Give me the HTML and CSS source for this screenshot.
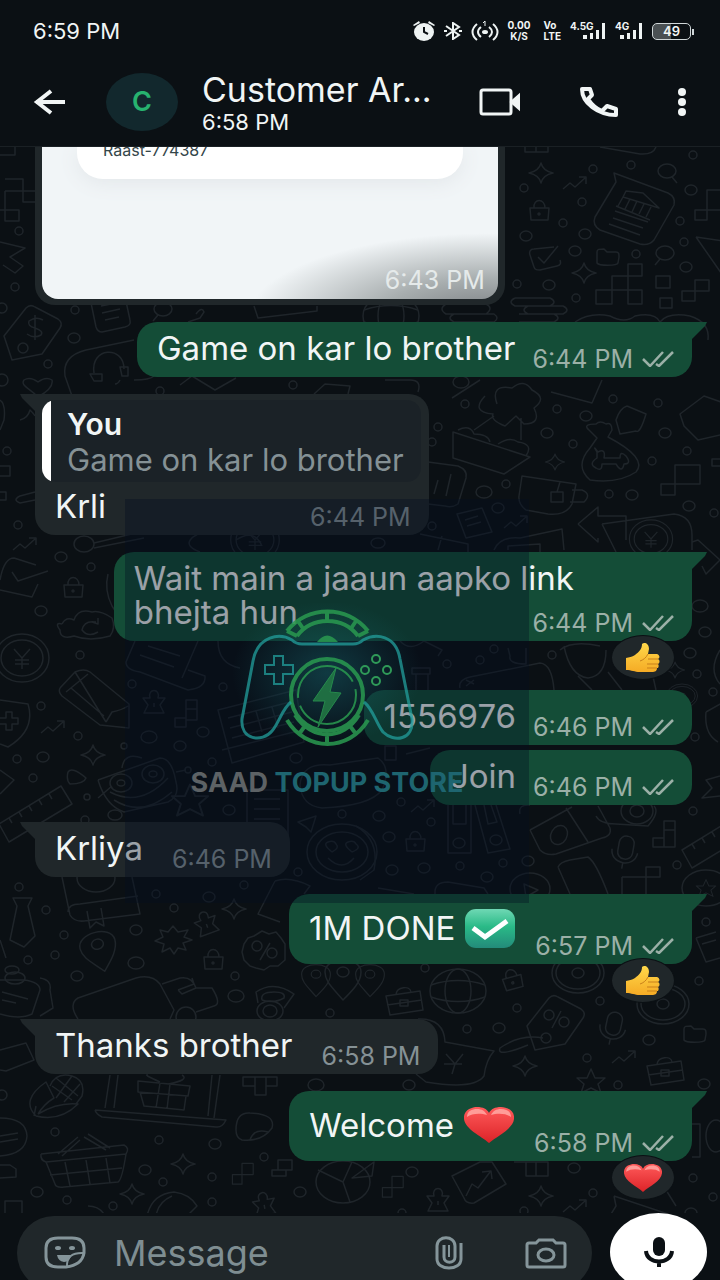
FILE: index.html
```html
<!DOCTYPE html>
<html lang="en">
<head>
  <meta charset="UTF-8">
  <meta name="viewport" content="width=device-width, initial-scale=1.0">
  <title>Chat</title>
  <link rel="stylesheet" href="styles.css">
</head>
<body>
  <!-- Shared shapes -->
  <svg class="defs" aria-hidden="true">
    <defs>
      <linearGradient id="redGrad" x1="0" y1="0" x2="0" y2="1">
        <stop offset="0" stop-color="#ff5a5a"/><stop offset="1" stop-color="#dc2328"/>
      </linearGradient>
      <linearGradient id="greenGrad" x1="0" y1="0" x2="0" y2="1">
        <stop offset="0" stop-color="#6fd8b4"/><stop offset="0.45" stop-color="#2aba87"/><stop offset="1" stop-color="#238b7a"/>
      </linearGradient>
      <linearGradient id="handGrad" x1="0" y1="0" x2="0" y2="1">
        <stop offset="0" stop-color="#ffd84a"/><stop offset="1" stop-color="#f5ab25"/>
      </linearGradient>
      <symbol id="heart" viewBox="0 0 50 36" preserveAspectRatio="none">
        <path d="M25 36C17 29 1 22 0 12C-1 3 8 0 13 0C19 0 23 2 25 6C27 2 31 0 37 0C42 0 51 3 50 12C49 22 33 29 25 36Z" fill="url(#redGrad)"/>
        <path d="M3 10C3 4 8 2 13 2C18 2 21 4 23 8C17 6 8 6 3 10ZM27 8C29 4 32 2 37 2C42 2 47 4 47 10C42 6 33 6 27 8Z" fill="#ff9c98"/>
      </symbol>
      <symbol id="thumb" viewBox="0 0 34 29" preserveAspectRatio="none">
        <path d="M0 15C3 14 6 14 9 12C13 9 16 6 16 1C18-1 23 0 23 6L22 11L31 11C34 12 34 15 32 16C34 17 34 20 32 21C33 22 33 25 31 25C31 28 29 29 26 29L14 29C8 29 6 27 0 27Z" fill="url(#handGrad)"/>
        <path d="M22 11C20 15 17 17 14 18M22 16L32 16M21 21L32 21M21 25L31 25" fill="none" stroke="#c9801a" stroke-width="1"/>
      </symbol>
      <symbol id="ticks" viewBox="0 0 32 16">
        <path d="M1 8L8 15L21 1M14 13L17 15L31 1" fill="none" stroke="currentColor" stroke-width="2.5"/>
      </symbol>
      <g id="spark"><path d="M0-10Q2-2 12 0Q2 2 0 10Q-2 2-12 0Q-2-2 0-10Z"/></g>
      <g id="lock"><path d="M-9-3L10-3L9 9L-8 9ZM-5-3C-6-13 6-13 6-3"/><circle cy="3" r="1"/></g>
      <g id="trend"><path d="M-12 6L-5 0L0 4L10-5M4-6L11-6L11 1"/></g>
      <g id="blocks"><path d="M-20 8H-4V22H-20ZM-4-6H12V8H-4ZM12-18H26V-6H12ZM12 8H26V22H12Z"/></g>
      <g id="blocks2"><path d="M-12 2H0V14H-12ZM0-12H14V2H0Z"/></g>
      <g id="pawn"><path d="M-10 11L10 11L6 3L11-4L4-4C7-14-7-14-4-4L-11-4L-6 3ZM0 1V5"/></g>
      <g id="folder"><path d="M-11-5C-11-8-9-8-4-8L-1-5L8-5C11-5 11-3 11 0L10 6C9 9-9 9-11 6Z"/></g>
      <g id="mic"><rect x="-7" y="-14" width="15" height="23" rx="7"/><path d="M-13 1C-12 17 12 17 13 1M0 13V19"/></g>
      <g id="coin"><ellipse rx="27" ry="24"/><ellipse rx="21" ry="18"/><path d="M-8-9L0 0L8-9M0 0V11M-7 2H7M-7 6H7"/></g>
      <g id="tag"><path d="M-30 8L-8-20C-5-23-2-23 1-21L24-9C28-6 28-3 26 0L8 26L-22 32Z"/><circle cx="-11" cy="20" r="5"/></g>
      <g id="note"><path d="M-20-14L14-20L20 8C21 12 19 14 15 15L-8 20C-12 20-13 18-14 15ZM-9-6L6-9M-8 1L10-3M-5 8L9 5"/></g>
      <g id="pin"><path d="M0 22C-10 10-18 4-18-6C-18-22 18-22 18-6C18 4 10 12 0 22Z"/><ellipse cy="-6" rx="6" ry="5"/></g>
      <g id="search"><ellipse rx="9" ry="7"/><path d="M5 6L10 12"/></g>
      <g id="globe"><ellipse rx="28" ry="22"/><ellipse rx="13" ry="22"/><path d="M-27-6C-10-12 10-12 27-6M-27 6C-10 12 10 12 27 6"/></g>
      <g id="star"><path d="M0-12L4-3L14-3L7 3L10 12L0 7L-10 12L-7 3L-14-3L-4-3Z"/></g>
      <g id="ring"><ellipse rx="26" ry="20"/><ellipse rx="22" ry="16"/><ellipse rx="6" ry="5"/></g>
      <g id="case"><path d="M-18-6L16-11L19 8L-14 13ZM-8-8C-7-15 6-17 7-10M-17 3L18-2"/><rect x="-4" y="-2" width="8" height="6"/></g>
      <g id="ruler"><path d="M-36 16L26-22L37-4L-26 34ZM-26 10L-23 15M-16 4L-13 9M-6-2L-3 3M4-8L7-3M14-14L17-9"/></g>
      <g id="check"><path d="M10-11L-10-9C-14-9-15-6-14-3L-10 9C-9 12-7 12-4 12L13 8C17 7 17 5 16 2M-6-1L0 5L14-12"/></g>
    </defs>
  </svg>

  <div class="phone">
    <!-- Status bar -->
    <div class="status">
      <span class="clock">6:59 PM</span>
      <div class="status-icons">
        <svg class="i-alarm" viewBox="0 0 22 20" fill="#eef3f3" role="img" aria-label="Alarm">
          <ellipse cx="11" cy="11" rx="10" ry="9"/><path d="M0 4L6 0L7 2L1 5ZM22 4L16 0L15 2L21 5Z"/>
          <path d="M11 6V11L15 13" fill="none" stroke="#0b1014" stroke-width="2"/>
        </svg>
        <svg class="i-bt" viewBox="0 0 18 18" fill="none" stroke="#eef3f3" stroke-width="2" role="img" aria-label="Bluetooth">
          <path d="M2 4L15 13L9 17V1L15 5L2 14M0 9H3M15 9H18"/>
        </svg>
        <svg class="i-hot" viewBox="0 0 28 20" fill="none" stroke="#eef3f3" stroke-width="2" role="img" aria-label="Hotspot">
          <path d="M6 3C0 8 0 14 6 19M10 6C6 9 6 13 10 16M22 3C28 8 28 14 22 19M18 6C22 9 22 13 18 16"/>
          <ellipse cx="14" cy="11" rx="3" ry="2" fill="#eef3f3" stroke="none"/><path d="M12 2L14 0V5" stroke-width="1"/>
        </svg>
        <span class="tiny"><b>0.00</b><b>K/S</b></span>
        <span class="tiny lte"><b>Vo</b><b>LTE</b></span>
        <span class="signal">
          <b>4.5G</b>
          <svg viewBox="0 0 24 18" fill="#eef3f3" aria-hidden="true"><path d="M1 13H5V17H1ZM8 11H11V17H8ZM14 8H17V17H14ZM20 1H23V17H20Z"/></svg>
        </span>
        <span class="signal">
          <b>4G</b>
          <svg viewBox="0 0 24 18" fill="#eef3f3" aria-hidden="true"><path d="M1 13H5V17H1ZM8 11H11V17H8ZM14 8H17V17H14ZM20 1H23V17H20Z"/></svg>
        </span>
        <span class="battery">49</span>
      </div>
    </div>

    <!-- Chat header -->
    <header class="topbar">
      <button class="icon-btn back" aria-label="Back">
        <svg width="33" height="26" viewBox="0 0 33 26" fill="none" stroke="#f1f5f5" stroke-width="4"><path d="M18 2L4 13L18 24M3 13H32"/></svg>
      </button>
      <div class="avatar">C</div>
      <div class="who">
        <h1>Customer Ar...</h1>
        <p>6:58 PM</p>
      </div>
      <div class="actions">
        <button class="icon-btn" aria-label="Video call">
          <svg width="42" height="28" viewBox="0 0 42 28" fill="none" stroke="#f1f5f5" stroke-width="3"><rect x="2" y="2" width="30" height="24" rx="2"/><path d="M32 14L40 7V21Z" fill="#f1f5f5" stroke-width="2"/></svg>
        </button>
        <button class="icon-btn" aria-label="Voice call">
          <svg width="38" height="30" viewBox="0 0 38 30" fill="none" stroke="#f1f5f5" stroke-width="4" stroke-linejoin="round"><path d="M2 2H10L12 8L8 12C12 18 17 22 22 24L27 19L36 22V28C18 28 2 16 2 2Z"/></svg>
        </button>
        <button class="icon-btn" aria-label="More options">
          <svg width="10" height="28" viewBox="0 0 10 28" fill="#f1f5f5"><ellipse cx="5" cy="4" rx="4" ry="4"/><ellipse cx="5" cy="14" rx="4" ry="4"/><ellipse cx="5" cy="24" rx="4" ry="4"/></svg>
        </button>
      </div>
    </header>

    <!-- Conversation -->
    <main class="chat">
      <svg class="wallpaper" viewBox="0 147 720 1133" preserveAspectRatio="xMidYMin slice" fill="none" stroke="#1f252a" stroke-width="1.5" stroke-linejoin="round" aria-hidden="true">
        <!-- right of the photo -->
        <use href="#spark" transform="translate(541 173)"/><use href="#trend" transform="translate(575 183)"/>
        <use href="#lock" transform="translate(539 211)"/><use href="#search" transform="translate(667 171)"/>
        <path d="M614 173L668 193Q676 197 674 205L654 240Q649 246 640 244L600 230Q592 225 595 217L616 182ZM623 197L626 191L643 193L659 208ZM616 206L650 220M615 211L648 222M623 197L618 206M630 199L625 209M637 201L632 212M644 204L639 214M651 207L646 217M613 218L643 228M609 224L640 235"/>
        <use href="#check" transform="translate(544 258)"/><use href="#folder" transform="translate(608 257)"/>
        <use href="#spark" transform="translate(584 273)"/><use href="#search" transform="translate(665 253) scale(-1 1)"/>
        <use href="#blocks" transform="translate(616 282)"/><path d="M656 276H670V288H656ZM660 298H672V308H660ZM682 291H695V301H682ZM695 280H709V291H695Z"/>
        <path d="M707 190H730V210H707ZM695 210H707V220H695ZM696 237L726 280M696 237L730 242M525 147V152H548V147M536 147V152M600 147L640 154Q653 155 656 147"/>
        <path d="M515 298H550Q558 302 550 306H515Q507 302 515 298M528 306H563Q571 310 563 314H528Q520 310 528 306M519 314H554Q562 318 554 322H519"/>
        <path d="M446 304H486Q494 308 486 314H446Q438 309 446 304M454 314H494Q500 318 494 322H454Q446 318 454 314"/>
        <use href="#globe" transform="translate(391 316)"/><path d="M575 322Q590 312 610 316Q625 324 635 316Q655 312 660 322Q668 312 690 316Q710 322 708 340"/>
        <!-- left edge, top -->
        <path d="M5 179H23V202H35M5 191H35M5 191V221H19V210H0M0 155H15V147M0 242L25 248L10 257L23 266L15 273L3 265"/>
        <use href="#tag" transform="translate(34 328)"/><path d="M43 320Q36 316 29 321Q27 326 35 328Q44 331 41 335Q34 339 27 334M35 315V340"/>
        <use href="#note" transform="translate(110 312)"/><use href="#search" transform="translate(163 309) scale(-1 1)"/>
        <path d="M134 340L86 350Q62 356 65 376L72 396M134 380Q150 380 154 376M94 373C90 347 124 345 124 369M90 374H102V381H94ZM120 367H128V376H122ZM120 380Q118 384 115 384"/>
        <path d="M38 397C30 388 20 386 24 380Q30 376 38 382Q46 376 52 380Q54 388 38 397M180 385L192 376L215 390L236 378M314 394L325 384L350 386L348 394"/>
        <path d="M254 306L258 318L317 311V306M188 322L200 318L204 312Q202 306 196 314"/>
        <!-- middle right -->
        <path d="M385 380H410Q422 380 418 392M452 398L480 380M497 404Q490 384 512 388Q524 378 532 390Q548 398 534 408Q542 424 524 424L516 416L505 426Q490 420 493 414Q470 412 485 396M474 430L494 416M521 418L521 440"/>
        <path d="M453 432L530 457L504 474L453 458ZM458 430Q470 424 474 434Q488 434 490 442M498 444Q510 436 518 442Q534 444 526 456"/>
        <path d="M428 462L458 466Q468 470 466 478L458 504Q452 508 445 506L428 504M438 480L434 494M451 474L446 496"/>
        <path d="M522 476L576 484L572 504Q566 516 548 514L526 510Q518 504 519 496ZM572 490H582Q592 494 584 502H570M560 482L557 492M551 492H563V502H551Z"/>
        <path d="M551 392L592 403L602 380M627 406L646 414Q640 434 636 431L620 434L616 420Q620 408 627 406M589 430Q582 424 596 424Q600 420 606 424Q612 422 612 430L608 437Q648 458 636 472Q618 484 590 480Q574 466 590 448L597 438ZM597 452Q592 444 598 452Q606 448 604 458H620Q620 450 626 456Q632 464 624 464Q622 474 616 464L602 464Q602 472 596 468Q588 464 597 458Z"/>
        <path d="M721 402L704 396L680 414L684 426L698 440L724 434M675 465H700V484H675ZM661 484H675V495H661ZM712 459H730V466H712Z"/>
        <use href="#spark" transform="translate(555 462) scale(.8)"/>
        <path d="M578 524L598 507V516H626V540M598 538V542L578 524M602 524L674 514Q692 516 692 535V550M602 524L616 552"/>
        <use href="#coin" transform="translate(651 539) scale(.8)"/><path d="M692 542L698 540L720 560L706 574L702 566"/>
        <path d="M457 514L482 508L492 532L466 538ZM465 520L478 516M467 526L481 522"/><use href="#trend" transform="translate(516 522)"/>
        <path d="M494 550Q500 536 520 538L562 529L564 550M508 550V546L540 544V552M420 534L468 544V552M442 536L438 550"/>
        <!-- left edge, middle -->
        <path d="M0 400Q6 404 4 420L0 430M20 420Q28 418 30 410Q34 414 35 416M0 466H10V476H0M35 492L20 496Q12 500 20 503L35 500M0 492H6V500H0"/>
        <ellipse cx="84" cy="544" rx="10" ry="8"/><path d="M94 543L140 532M94 548L144 538"/><use href="#trend" transform="translate(25 544)"/>
        <path d="M0 580Q4 558 14 558L36 565M12 572L18 581L48 571M38 584L32 597L0 590"/><use href="#lock" transform="translate(73 588)"/>
        <path d="M108 574Q104 590 112 606L116 612M62 624Q54 622 60 630Q60 640 74 636Q90 642 110 636Q116 628 112 618Q100 610 92 612Q78 608 74 620Q66 616 62 624M96 622Q84 620 82 630Q88 638 98 632M92 622L98 624L98 618"/>
        <use href="#coin" transform="translate(22 658)"/><path d="M60 688L75 672Q84 668 90 672L129 704V728L100 725L62 696Q58 692 60 688M75 672L106 722M106 722L112 712Q122 710 128 706M66 692L88 674M71 688L104 716"/>
        <path d="M0 700L28 704Q36 730 8 747L0 744M0 718H6V712H12V718H18V724H12V730H6V724H0"/><use href="#trend" transform="translate(53 727)"/>
        <use href="#spark" transform="translate(93 755)"/><path d="M68 772Q72 766 86 778Q84 784 70 784Q66 780 68 772M0 770L14 780L0 794"/>
        <use href="#ruler" transform="translate(35 808)"/>
        <!-- under the watermark -->
        <path d="M200 552C180 545 190 535 210 530M236 540Q254 528 262 546"/><use href="#coin" transform="translate(255 540) scale(.9)"/>
        <path d="M135 641L126 662Q126 670 140 672L188 690Q206 688 205 676L188 670M198 641L182 678M140 655L174 667M148 646L180 656M218 641Q218 664 240 668"/>
        <use href="#pawn" transform="translate(154 702)"/><path d="M186 700H197V720H186ZM186 709H197M175 718H186V727H175Z"/>
        <path d="M218 710L296 690L304 742L232 763ZM222 750L302 730M228 718L290 702M230 728L292 712M232 738L294 722M240 715L246 736M256 711L262 732M272 707L278 728"/>
        <path d="M98 780L160 758Q172 758 176 782Q180 796 168 802L124 812Q106 806 98 780M110 792Q140 808 168 778M114 800Q142 818 172 792M122 768Q124 752 142 758M112 786L98 798M176 772L186 770"/>
        <ellipse cx="121" cy="783" rx="11" ry="9"/><ellipse cx="153" cy="774" rx="11" ry="9"/><ellipse cx="121" cy="783" rx="4" ry="3"/><ellipse cx="153" cy="774" rx="4" ry="3"/><circle cx="124" cy="746" r="3"/><circle cx="87" cy="797" r="3"/><circle cx="188" cy="770" r="3"/>
        <use href="#star" transform="translate(190 800) scale(1.3)"/><path d="M247 822V790H288V860M254 799H280M254 809H280M254 819H280M300 785Q302 762 330 765L378 758Q392 768 382 790Q370 806 322 808Q302 806 300 785"/>
        <path d="M298 822L316 816L311 832L306 827Z"/><ellipse cx="342" cy="852" rx="35" ry="28"/><ellipse cx="342" cy="852" rx="26" ry="20"/><path d="M328 858Q342 872 354 858M332 852Q322 844 328 842Q334 840 336 844Q340 848 332 852M352 852Q342 844 348 842Q354 840 356 844Q362 848 352 852"/>
        <path d="M385 746H396V760H385ZM406 754L430 748M448 805V853H471V805M453 805V824H466V805M475 805L488 853L510 849L496 805M484 805L488 824L497 822L491 805"/>
        <ellipse cx="459" cy="843" rx="6" ry="5"/><ellipse cx="496" cy="840" rx="6" ry="5"/><use href="#trend" transform="translate(423 806)"/><use href="#lock" transform="translate(415 842)"/>
        <path d="M356 826Q380 840 374 870L360 880M400 641Q410 652 424 641L442 650L438 656M508 648L510 656Q508 664 526 664V648M412 668H430V674H412ZM416 674V690M428 674V690M460 688Q458 680 470 677L540 663Q552 664 554 690M466 680L474 684M474 680L466 686"/>
        <!-- right, middle -->
        <path d="M564 646Q570 676 588 678Q606 676 606 650M560 650Q572 640 600 646M578 676L592 690M608 672L622 690M652 672L656 690"/><use href="#spark" transform="translate(675 670) scale(.8)"/>
        <use href="#ring" transform="translate(682 696) scale(.6)"/><path d="M720 650Q708 670 720 684M706 712L724 702M706 712Q704 734 718 742"/>
        <path d="M530 830L572 807M520 814Q518 804 530 805M530 830L540 850Q546 856 556 854L602 838Q612 836 610 828L598 806M566 808L588 842M596 816Q600 824 616 824L648 826Q660 812 654 806"/><ellipse cx="559" cy="835" rx="8" ry="10" transform="rotate(30 559 835)"/>
        <ellipse cx="637" cy="811" rx="16" ry="13"/><ellipse cx="637" cy="811" rx="7" ry="6"/><use href="#mic" transform="translate(625 850) rotate(10)"/>
        <path d="M664 821H675V847H664ZM664 830H675M653 838H664V847H653Z"/><use href="#ruler" transform="translate(718 834)"/>
        <path d="M720 776L706 780L712 788L702 798L720 796M558 867Q560 862 570 860L588 857Q596 862 608 894M558 867L570 894M646 867H660V877H646ZM622 877H646V894M622 877V894"/>
        <ellipse cx="706" cy="888" rx="24" ry="18"/><use href="#star" transform="translate(706 888) scale(.7)"/><ellipse cx="530" cy="889" rx="20" ry="16"/><path d="M524 884L538 890L526 897Z"/>
        <path d="M378 888L414 894M435 894Q434 882 448 882L484 888L488 894"/>
        <!-- left, lower -->
        <path d="M13 898H32L28 906L35 936L24 947L10 940L17 906ZM62 877L70 915Q74 922 84 921L140 914L132 877M68 912Q68 904 80 904L138 896M87 911L90 928L96 922L104 926L101 908"/>
        <ellipse cx="96" cy="878" rx="19" ry="14"/><use href="#pin" transform="translate(99 950) rotate(-15)"/>
        <path d="M173 926L178 932L188 930L184 937L192 940L183 943L186 950L178 948L174 954L170 948L162 952L164 944L155 941L163 937L160 930L168 932Z"/>
        <use href="#pawn" transform="translate(206 923) rotate(-20)"/><use href="#spark" transform="translate(234 909)"/><path d="M275 881Q290 876 310 886L304 894M275 881L258 914L280 922"/>
        <use href="#lock" transform="translate(213 960)"/><path d="M262 931L269 934L276 932L281 938L285 944V960L278 966L270 966L264 970L256 968L250 966L244 960L242 952L244 944L248 938L254 936ZM270 943L260 960"/><circle cx="257" cy="946" r="5"/><circle cx="272" cy="953" r="5"/>
        <path d="M78 1019Q68 1004 78 998L136 978Q152 974 160 984L174 1010L170 1019M162 984L180 978Q192 976 196 988L212 988Q222 1004 214 1006L196 1012M178 990L194 984L192 978M178 990L182 994L196 988"/><circle cx="186" cy="1017" r="10"/>
        <ellipse cx="270" cy="1011" rx="13" ry="10"/><ellipse cx="270" cy="1011" rx="7" ry="6"/><path d="M258 1003L256 992Q274 980 294 994L284 1008M262 1000Q260 992 274 992Q286 992 284 998Q274 1004 262 1000"/>
        <path d="M0 980L24 980Q40 982 40 990L32 1014Q20 1020 0 1014M40 978Q52 980 50 990L53 1008L40 1016M2 992L28 999M2 1000L16 1003M0 940L6 958"/><ellipse cx="12" cy="970" rx="7" ry="4"/><ellipse cx="15" cy="978" rx="10" ry="6"/>
        <use href="#pin" transform="translate(316 979) scale(.8)"/><use href="#pin" transform="translate(343 978)"/><use href="#pin" transform="translate(370 979) scale(.8)"/><use href="#case" transform="translate(404 1002)"/><use href="#globe" transform="translate(458 991)"/>
        <use href="#lock" transform="translate(512 980) rotate(-15)"/><use href="#ring" transform="translate(578 973)"/><use href="#ring" transform="translate(663 1004)"/>
        <use href="#tag" transform="translate(557 1018)"/><circle cx="549" cy="1015" r="5"/><circle cx="564" cy="1022" r="5"/><path d="M561 1011L552 1028M543 1038Q520 1034 500 1048Q496 1058 528 1045"/>
        <use href="#mic" transform="translate(613 1026) rotate(12)"/><use href="#trend" transform="translate(624 1057)"/><use href="#folder" transform="translate(695 1034)"/><use href="#case" transform="translate(665 1072)"/>
        <use href="#spark" transform="translate(525 1066)"/><use href="#star" transform="translate(591 1081)"/><path d="M418 1019Q444 1018 445 1042L494 1051Q486 1060 484 1076Q474 1090 426 1082L416 1074M446 1054L455 1064L463 1054M455 1064L452 1074M444 1064L462 1064M696 938L716 932M696 938L706 962L720 958M702 944L716 940"/>
        <path d="M0 1050L26 1043L34 1060L6 1071L0 1070M36 1106L34 1116M36 1116Q20 1100 46 1082L54 1098Q44 1104 38 1114M36 1116Q60 1122 78 1104Q58 1102 38 1114M50 1086Q56 1072 72 1076Q86 1080 82 1096L76 1104M56 1078L78 1096M52 1086L72 1100M72 1076L56 1098M80 1084L64 1102"/>
        <path d="M110 1075L105 1108M118 1075L114 1108M220 1075L214 1118M212 1075L208 1116M95 1110L226 1120Q222 1128 216 1127L102 1117Q96 1114 95 1110M138 1081L190 1086L188 1096L138 1092ZM140 1092L144 1106L184 1110L186 1096M160 1083L156 1108M170 1084L167 1109M160 1082Q142 1074 148 1075M168 1084Q190 1080 182 1075"/>
        <path d="M243 1077H255V1086H243ZM255 1077H266V1095H255ZM266 1077H277V1086H266ZM236 1130Q236 1112 250 1113Q276 1114 272 1128Q262 1142 242 1140Q236 1138 236 1130M250 1140Q254 1128 268 1132"/>
        <path d="M0 1118Q26 1118 27 1136Q26 1154 0 1156M0 1136L18 1133M0 1142L18 1139M0 1165H10L16 1169V1177L0 1178"/>
        <path d="M41 1154L124 1145Q130 1148 126 1154L46 1162Q40 1160 41 1154M46 1162L55 1184Q56 1188 64 1187L118 1182Q122 1180 126 1154M50 1175L122 1168M65 1162L70 1186M86 1160L90 1184M106 1158L110 1183M58 1154L78 1137M62 1156L80 1140M84 1137L106 1150M88 1134L110 1148"/>
        <use href="#spark" transform="translate(183 1164)"/><use href="#spark" transform="translate(132 1194)"/><use href="#pawn" transform="translate(264 1204) rotate(-10)"/><use href="#blocks2" transform="translate(242 1173) scale(.8)"/>
        <path d="M147 1216Q152 1194 174 1192Q190 1194 197 1206L187 1216M156 1216Q158 1202 172 1196M5 1201H22V1225H5ZM22 1215H36V1226M88 1206Q100 1206 105 1216M272 1170H286V1176H272ZM278 1160H292V1170H278Z"/>
        <ellipse cx="343" cy="1182" rx="27" ry="21"/><path d="M343 1182L318 1170M343 1182L350 1202M343 1182L352 1162M374 1162L372 1176L352 1178Z"/>
        <use href="#blocks2" transform="translate(392 1186) scale(.8)"/><use href="#pawn" transform="translate(438 1200)"/><path d="M452 1176L480 1162H492L506 1184L474 1203Q466 1204 464 1198ZM466 1196L472 1184L478 1188L490 1172M482 1172L491 1171L492 1179M514 1162H548V1176H526V1162M536 1162V1176"/>
        <use href="#spark" transform="translate(541 1196)"/><use href="#trend" transform="translate(575 1206)"/><path d="M614 1196L668 1214M614 1196L616 1206L595 1240Q592 1252 606 1256M707 1214H730V1234H707ZM666 1190L676 1206M692 1124H700V1157H692"/><ellipse cx="716" cy="1136" rx="10" ry="16"/>
        <!-- loose bubbles -->
        <g>
          <circle cx="593" cy="169" r="4"/><circle cx="631" cy="165" r="4"/><circle cx="693" cy="155" r="4"/><circle cx="524" cy="188" r="4"/><ellipse cx="691" cy="190" rx="6" ry="5"/><circle cx="582" cy="202" r="4"/><circle cx="563" cy="223" r="4"/><circle cx="680" cy="221" r="4"/><ellipse cx="526" cy="236" rx="6" ry="5"/><ellipse cx="585" cy="234" rx="6" ry="5"/><ellipse cx="575" cy="251" rx="6" ry="5"/><circle cx="636" cy="254" r="4"/><circle cx="684" cy="242" r="4"/><ellipse cx="686" cy="267" rx="6" ry="5"/><circle cx="517" cy="284" r="4"/><ellipse cx="549" cy="285" rx="6" ry="5"/><circle cx="576" cy="298" r="4"/>
          <circle cx="19" cy="231" r="4"/><circle cx="15" cy="287" r="4"/><circle cx="75" cy="310" r="4"/><ellipse cx="74" cy="338" rx="6" ry="5"/><circle cx="48" cy="364" r="4"/><circle cx="2" cy="308" r="5"/><circle cx="2" cy="380" r="6"/><circle cx="160" cy="391" r="4"/><circle cx="293" cy="385" r="4"/>
          <ellipse cx="461" cy="382" rx="8" ry="6"/><circle cx="465" cy="404" r="4"/><circle cx="557" cy="409" r="4"/><ellipse cx="586" cy="416" rx="6" ry="5"/><circle cx="438" cy="427" r="4"/><ellipse cx="547" cy="433" rx="6" ry="5"/><circle cx="432" cy="442" r="4"/><circle cx="573" cy="444" r="4"/><circle cx="613" cy="399" r="4"/><circle cx="658" cy="403" r="4"/><ellipse cx="665" cy="433" rx="6" ry="5"/><circle cx="687" cy="451" r="4"/><circle cx="652" cy="461" r="4"/><circle cx="609" cy="494" r="4"/><ellipse cx="632" cy="495" rx="6" ry="5"/><ellipse cx="484" cy="492" rx="8" ry="6"/><circle cx="506" cy="484" r="4"/><ellipse cx="689" cy="506" rx="6" ry="5"/><circle cx="714" cy="513" r="4"/><ellipse cx="498" cy="508" rx="6" ry="5"/><circle cx="432" cy="526" r="4"/><ellipse cx="378" cy="543" rx="7" ry="5"/>
          <circle cx="7" cy="451" r="4"/><circle cx="18" cy="525" r="4"/><ellipse cx="61" cy="557" rx="6" ry="5"/><circle cx="91" cy="567" r="4"/><ellipse cx="41" cy="611" rx="6" ry="5"/><circle cx="80" cy="655" r="4"/><circle cx="41" cy="706" r="4"/><circle cx="78" cy="736" r="4"/><circle cx="17" cy="759" r="4"/><ellipse cx="43" cy="757" rx="6" ry="5"/><circle cx="33" cy="778" r="4"/><circle cx="85" cy="820" r="4"/><ellipse cx="115" cy="815" rx="7" ry="5"/>
          <circle cx="132" cy="684" r="4"/><circle cx="223" cy="687" r="4"/><ellipse cx="149" cy="737" rx="8" ry="6"/><ellipse cx="180" cy="746" rx="6" ry="5"/><ellipse cx="203" cy="732" rx="6" ry="5"/><circle cx="212" cy="762" r="4"/><ellipse cx="296" cy="758" rx="6" ry="5"/><ellipse cx="229" cy="810" rx="6" ry="5"/><circle cx="342" cy="814" r="4"/><circle cx="298" cy="872" r="4"/><circle cx="244" cy="885" r="4"/><ellipse cx="209" cy="897" rx="6" ry="5"/><circle cx="156" cy="894" r="4"/><circle cx="401" cy="802" r="4"/><ellipse cx="379" cy="816" rx="6" ry="5"/><circle cx="431" cy="822" r="4"/><ellipse cx="389" cy="837" rx="6" ry="5"/><ellipse cx="392" cy="870" rx="6" ry="5"/><ellipse cx="424" cy="868" rx="6" ry="5"/><circle cx="460" cy="866" r="4"/><ellipse cx="487" cy="877" rx="6" ry="5"/><circle cx="503" cy="863" r="4"/><ellipse cx="528" cy="861" rx="6" ry="5"/>
          <ellipse cx="700" cy="606" rx="8" ry="6"/><ellipse cx="705" cy="632" rx="6" ry="5"/><ellipse cx="690" cy="653" rx="6" ry="5"/><circle cx="697" cy="674" r="4"/><circle cx="713" cy="692" r="4"/><circle cx="695" cy="737" r="4"/><circle cx="552" cy="655" r="4"/><circle cx="494" cy="649" r="4"/><circle cx="447" cy="664" r="4"/><circle cx="480" cy="660" r="4"/><circle cx="693" cy="811" r="4"/><circle cx="677" cy="865" r="4"/>
          <circle cx="19" cy="887" r="4"/><circle cx="46" cy="910" r="4"/><circle cx="64" cy="935" r="4"/><circle cx="55" cy="955" r="4"/><circle cx="28" cy="960" r="4"/><ellipse cx="77" cy="976" rx="6" ry="5"/><ellipse cx="136" cy="930" rx="6" ry="5"/><ellipse cx="136" cy="963" rx="8" ry="6"/><circle cx="174" cy="908" r="4"/><circle cx="235" cy="976" r="4"/><ellipse cx="236" cy="996" rx="8" ry="6"/><circle cx="330" cy="1013" r="4"/><circle cx="425" cy="968" r="4"/><circle cx="517" cy="1008" r="4"/><circle cx="467" cy="1029" r="4"/><ellipse cx="499" cy="1028" rx="6" ry="5"/><ellipse cx="409" cy="1085" rx="6" ry="5"/><circle cx="587" cy="1058" r="4"/><circle cx="600" cy="1001" r="4"/><ellipse cx="649" cy="1040" rx="6" ry="5"/><circle cx="618" cy="1085" r="4"/><ellipse cx="704" cy="1084" rx="6" ry="5"/><circle cx="699" cy="981" r="4"/><circle cx="706" cy="922" r="4"/>
          <ellipse cx="316" cy="1085" rx="8" ry="6"/><circle cx="2" cy="1095" r="5"/><circle cx="55" cy="1132" r="4"/><circle cx="159" cy="1140" r="4"/><ellipse cx="215" cy="1144" rx="6" ry="5"/><ellipse cx="145" cy="1170" rx="6" ry="5"/><circle cx="264" cy="1157" r="4"/><circle cx="212" cy="1177" r="4"/><circle cx="163" cy="1182" r="4"/><ellipse cx="37" cy="1192" rx="6" ry="5"/><circle cx="67" cy="1200" r="4"/><circle cx="113" cy="1206" r="4"/><circle cx="212" cy="1202" r="4"/><ellipse cx="300" cy="1192" rx="6" ry="5"/><ellipse cx="412" cy="1172" rx="6" ry="5"/><circle cx="402" cy="1213" r="4"/><circle cx="524" cy="1211" r="4"/><ellipse cx="574" cy="1168" rx="6" ry="5"/><circle cx="593" cy="1193" r="4"/><circle cx="693" cy="1178" r="4"/><ellipse cx="691" cy="1213" rx="6" ry="5"/><circle cx="713" cy="1197" r="4"/><circle cx="583" cy="1226" r="4"/>
        </g>
      </svg>

      <div class="msg in photo">
        <div class="picture">
          <div class="receipt">Raast-774387</div>
          <time>6:43 PM</time>
        </div>
      </div>

      <div class="msg out tail">
        <p>Game on kar lo brother</p>
        <span class="meta"><time>6:44 PM</time><svg class="ticks"><use href="#ticks"/></svg></span>
      </div>

      <div class="msg in tail stacked">
        <blockquote>
          <strong>You</strong>
          <span>Game on kar lo brother</span>
        </blockquote>
        <p>Krli</p>
        <span class="meta"><time>6:44 PM</time></span>
      </div>

      <div class="msg out tail stacked reacted">
        <p>Wait main a jaaun aapko link bhejta hun</p>
        <span class="meta"><time>6:44 PM</time><svg class="ticks"><use href="#ticks"/></svg></span>
        <span class="reaction"><svg class="e-thumb" role="img" aria-label="Thumbs up"><use href="#thumb"/></svg></span>
      </div>

      <div class="msg out">
        <p>1556976</p>
        <span class="meta"><time>6:46 PM</time><svg class="ticks"><use href="#ticks"/></svg></span>
      </div>

      <div class="msg out follow">
        <p>Join</p>
        <span class="meta"><time>6:46 PM</time><svg class="ticks"><use href="#ticks"/></svg></span>
      </div>

      <div class="msg in tail">
        <p>Krliya</p>
        <span class="meta"><time>6:46 PM</time></span>
      </div>

      <div class="msg out tail big reacted">
        <p>1M DONE
          <svg class="e-check" viewBox="0 0 50 39" role="img" aria-label="Check mark">
            <rect width="50" height="39" rx="11" fill="url(#greenGrad)"/>
            <path d="M8 19L20 28L42 12" fill="none" stroke="#fff" stroke-width="5"/>
          </svg>
        </p>
        <span class="meta"><time>6:57 PM</time><svg class="ticks"><use href="#ticks"/></svg></span>
        <span class="reaction"><svg class="e-thumb" role="img" aria-label="Thumbs up"><use href="#thumb"/></svg></span>
      </div>

      <div class="msg in tail">
        <p>Thanks brother</p>
        <span class="meta"><time>6:58 PM</time></span>
      </div>

      <div class="msg out tail big reacted">
        <p>Welcome
          <svg class="e-heart" role="img" aria-label="Heart"><use href="#heart"/></svg>
        </p>
        <span class="meta"><time>6:58 PM</time><svg class="ticks"><use href="#ticks"/></svg></span>
        <span class="reaction"><svg class="e-heart-small" role="img" aria-label="Heart"><use href="#heart"/></svg></span>
      </div>

      <!-- Store watermark laid over the chat -->
      <div class="watermark">
        <svg width="190" height="150" viewBox="0 0 190 150" fill="none" aria-hidden="true">
          <defs><radialGradient id="glow"><stop offset="0" stop-color="#1c7a80" stop-opacity=".4"/><stop offset="1" stop-color="#1c7a80" stop-opacity="0"/></radialGradient></defs>
          <ellipse cx="95" cy="70" rx="95" ry="72" fill="url(#glow)"/>
          <g stroke="#2a9a50" stroke-width="4" opacity=".85">
            <path d="M55 28C76 2 115 2 136 28M65 33C80 13 111 13 126 33M95 8V20M55 28L65 33M136 28L126 33M66 18L72 27M124 18L118 27"/>
            <path d="M55 117C74 149 117 149 136 117M63 112C80 138 111 138 127 112M95 130V143M67 131L73 123M124 131L118 123"/>
            <path d="M85 39Q95 26 106 39Z" fill="#2a9a50" stroke="none"/>
            <ellipse cx="95" cy="92" rx="36" ry="36"/>
            <ellipse cx="95" cy="92" rx="29" ry="29" stroke-width="2" stroke-dasharray="80 8"/>
            <path d="M104 65L81 98L93 98L86 124L109 90L98 89Z" fill="#237a45" stroke-width="1"/>
          </g>
          <g stroke="#229f9c" stroke-width="3" opacity=".75">
            <path d="M59 99C50 106 47 120 40 128C30 140 8 137 10 116L21 58C26 32 48 30 60 37Q64 41 70 41L121 41Q127 41 131 37C144 30 164 32 168 56L180 116C182 137 162 140 151 129C144 120 141 106 132 99"/>
            <path d="M42 53H51V62H61V71H51V81H42V71H33V62H42Z" stroke-width="2"/>
          </g>
          <g stroke="#2f9a58" stroke-width="2"><circle cx="144" cy="56" r="4"/><circle cx="133" cy="67" r="4"/><circle cx="155" cy="67" r="4"/><circle cx="144" cy="78" r="4"/></g>
        </svg>
        <span class="brand"><span>SAAD</span> TOPUP STORE</span>
      </div>
    </main>

    <!-- Composer -->
    <form class="composer">
      <div class="field">
        <button type="button" class="icon-btn" aria-label="Stickers">
          <svg width="42" height="34" viewBox="0 0 42 34" fill="none" stroke="#85959a" stroke-width="3">
            <path d="M22 31H14Q2 31 2 21V12Q2 2 14 2H28Q40 2 40 12V17Q38 29 22 31Z"/><path d="M40 17Q22 16 23 31" stroke-width="2"/>
            <path d="M13 19H27Q26 26 20 26Q14 25 13 19Z" fill="#85959a" stroke="none"/><ellipse cx="14" cy="12" rx="3" ry="2" fill="#85959a" stroke="none"/><ellipse cx="28" cy="12" rx="3" ry="2" fill="#85959a" stroke="none"/>
          </svg>
        </button>
        <input type="text" placeholder="Message" aria-label="Message">
        <button type="button" class="icon-btn" aria-label="Attach">
          <svg width="28" height="34" viewBox="0 0 28 34" fill="none" stroke="#85959a" stroke-width="3"><path d="M26 7V23C26 35 2 35 2 23V10C2-1 20-1 20 10V21C20 28 9 28 9 21V9"/><path d="M14 9V21" stroke-width="2"/></svg>
        </button>
        <button type="button" class="icon-btn" aria-label="Camera">
          <svg width="42" height="31" viewBox="0 0 42 31" fill="none" stroke="#85959a" stroke-width="3"><path d="M2 7Q2 5 4 5H11L14 2H28L31 5H38Q40 5 40 7V27Q40 29 38 29H4Q2 29 2 27Z"/><ellipse cx="21" cy="17" rx="8" ry="6"/></svg>
        </button>
      </div>
      <button type="button" class="voice" aria-label="Record voice message">
        <svg width="30" height="32" viewBox="0 0 30 32" fill="none" stroke="#0b1014" stroke-width="4"><rect x="9" y="1" width="12" height="19" rx="6" fill="#0b1014" stroke="none"/><path d="M2 15C3 29 27 29 28 15M15 25V31"/></svg>
      </button>
    </form>
  </div>
</body>
</html>
```

FILE: styles.css
```css
* {
  box-sizing: border-box;
}

body {
  margin: 0;
  background: #0b1014;
  color: #f1f5f5;
  font-family: Inter, Roboto, sans-serif;
}

h1, p, blockquote {
  margin: 0;
  font-weight: 400;
}

svg {
  display: block;
}

.defs {
  position: absolute;
  width: 0;
  height: 0;
}

.phone {
  display: flex;
  flex-direction: column;
  height: 100vh;
  overflow: hidden;
}

.icon-btn {
  padding: 0;
  border: none;
  background: none;
  cursor: pointer;
}

/* Status bar */
.status {
  display: flex;
  flex: none;
  align-items: center;
  justify-content: space-between;
  height: 62px;
  padding: 0 29px 0 33px;
}

.clock {
  font-size: 22px;
}

.status-icons {
  display: flex;
  align-items: center;
  gap: 9px;
}

.i-alarm {
  width: 22px;
  height: 20px;
}

.i-bt {
  width: 18px;
  height: 18px;
}

.i-hot {
  width: 28px;
  height: 20px;
}

.tiny {
  display: flex;
  flex-direction: column;
  align-items: center;
  font-size: 10px;
  line-height: 11px;
}

.lte {
  align-items: flex-start;
  margin-left: 4px;
}

.signal {
  position: relative;
  display: flex;
  justify-content: flex-end;
  width: 36px;
}

.signal b {
  position: absolute;
  top: -1px;
  left: 0;
  font-size: 10px;
  line-height: 10px;
}

.signal svg {
  width: 24px;
  height: 18px;
}

.signal + .signal {
  width: 28px;
}

.battery {
  position: relative;
  width: 39px;
  border: 1px solid #cfd6d8;
  border-radius: 5px;
  background: linear-gradient(90deg, #4a5053 49%, transparent 49%);
  font-size: 13px;
  font-weight: 600;
  line-height: 15px;
  text-align: center;
}

.battery::after {
  content: "";
  position: absolute;
  top: 5px;
  right: -4px;
  width: 2px;
  height: 6px;
  background: #cfd6d8;
}

/* Chat header */
.topbar {
  display: flex;
  flex: none;
  align-items: center;
  height: 85px;
  padding: 0 33px 4px 33px;
  border-bottom: 1px solid #1a2024;
}

.avatar {
  width: 72px;
  height: 58px;
  margin: 0 24px 0 40px;
  border-radius: 50%;
  background: #12282d;
  color: #27b36f;
  font-size: 27px;
  font-weight: 600;
  line-height: 58px;
  text-align: center;
}

.who {
  flex: 1;
  padding-top: 4px;
}

.who h1 {
  font-size: 34px;
  line-height: 36px;
  white-space: nowrap;
}

.who p {
  font-size: 22px;
  line-height: 28px;
}

.actions {
  display: flex;
  align-items: center;
  gap: 59px;
}

/* Conversation */
.chat {
  position: relative;
  display: flex;
  flex: 1;
  flex-direction: column;
  align-items: flex-start;
  gap: 17px;
  min-height: 0;
  padding: 0 28px 0 35px;
  overflow: hidden;
}

.wallpaper {
  position: absolute;
  top: 0;
  left: 0;
  width: 100%;
}

.msg {
  position: relative;
  display: flex;
  flex: none;
  align-items: flex-end;
  gap: 17px;
  max-width: 88%;
  padding: 0 18px 0 20px;
  border-radius: 20px;
  font-size: 33px;
}

.msg p {
  padding: 9px 0 12px;
  line-height: 34px;
}

.in {
  gap: 29px;
  background: #20272a;
}

.out {
  align-self: flex-end;
  background: #144d37;
}

.tail.in {
  border-top-left-radius: 0;
}

.tail.out {
  border-top-right-radius: 0;
}

.tail::before {
  content: "";
  position: absolute;
  top: 0;
  width: 15px;
  height: 17px;
  background: inherit;
}

.tail.in::before {
  right: 100%;
  clip-path: polygon(0 0, 100% 0, 100% 100%, 2px 4px);
}

.tail.out::before {
  left: 100%;
  clip-path: polygon(0 0, 100% 0, 13px 4px, 0 100%);
}

.meta {
  display: flex;
  align-items: center;
  gap: 9px;
  padding-bottom: 7px;
  color: #859195;
  font-size: 25px;
  line-height: 22px;
  white-space: nowrap;
}

.out .meta {
  color: #9bb0a7;
}

.ticks {
  width: 32px;
  height: 16px;
}

.stacked {
  flex-direction: column;
  align-items: stretch;
  gap: 0;
}

.stacked .meta {
  align-self: flex-end;
  margin-top: -29px;
}

.follow {
  margin-top: -12px;
}

.big p {
  display: flex;
  align-items: center;
  gap: 10px;
  padding-right: 3px;
  padding-bottom: 11px;
  line-height: 50px;
}

.e-check {
  width: 50px;
  height: 39px;
}

.e-heart {
  width: 50px;
  height: 36px;
}

.e-heart-small {
  width: 38px;
  height: 28px;
}

.e-thumb {
  width: 34px;
  height: 29px;
}

.reacted {
  margin-bottom: 32px;
}

.big.reacted {
  margin-bottom: 38px;
}

.reaction {
  position: absolute;
  right: 17px;
  bottom: -39px;
  display: flex;
  align-items: center;
  justify-content: center;
  width: 64px;
  height: 45px;
  border: 1px solid #0b1014;
  border-radius: 50%;
  background: #20272a;
}

/* Photo message */
.photo {
  width: 71.5%;
  padding: 0 7px 6px;
  border-radius: 0 0 20px 20px;
}

.picture {
  flex: 1;
  height: 152px;
  padding: 0 35px;
  border-radius: 0 0 16px 16px;
  background: radial-gradient(ellipse 240px 84px at 98% 112%, #777b7f 0, #a7adae 45%, #f1f5f7 100%);
}

.receipt {
  display: flex;
  flex-direction: column;
  justify-content: flex-end;
  height: 32px;
  padding: 0 26px 21px;
  border-radius: 0 0 26px 26px;
  background: #fff;
  box-shadow: 0 4px 20px #e3e7ea;
  color: #34464a;
  font-size: 16px;
  line-height: 16px;
}

.picture time {
  position: absolute;
  right: 20px;
  bottom: 13px;
  color: #e5eaea;
  font-size: 25px;
  line-height: 24px;
}

/* Quoted message */
blockquote {
  display: flex;
  flex-direction: column;
  margin: 6px -10px 0 -13px;
  padding: 6px 17px 5px 25px;
  border-radius: 14px;
  background: linear-gradient(90deg, #fff 9px, #1b2227 9px);
  font-size: 31px;
  line-height: 35px;
}

blockquote strong {
  font-size: 30px;
  font-weight: 600;
  line-height: 36px;
}

blockquote span {
  color: #859195;
}

blockquote + p {
  margin-top: -2px;
}

/* Watermark */
.watermark {
  position: absolute;
  top: 352px;
  left: 125px;
  display: flex;
  flex-direction: column;
  align-items: center;
  width: 404px;
  height: 404px;
  padding-top: 104px;
  background: rgba(3, 14, 34, 0.36);
  pointer-events: none;
}

.brand {
  margin-top: 13px;
  color: #1e6570;
  font-size: 27px;
  font-weight: 700;
  line-height: 34px;
  white-space: nowrap;
}

.brand span {
  color: #5d6265;
}

/* Composer */
.composer {
  position: relative;
  display: flex;
  flex: none;
  gap: 18px;
  height: 67px;
  padding: 0 13px 0 17px;
}

.field {
  display: flex;
  flex: 1;
  align-items: center;
  min-width: 0;
  height: 74px;
  margin-top: 3px;
  padding: 0 25px 0 27px;
  border-radius: 38px;
  background: #20272a;
}

.field input {
  flex: 1;
  min-width: 0;
  margin: 0 20px 0 28px;
  padding: 0;
  border: none;
  outline: none;
  background: none;
  color: #f1f5f5;
  font-family: inherit;
  font-size: 36px;
}

.field input::placeholder {
  color: #7f8e92;
  opacity: 1;
}

.field input + .icon-btn {
  margin-right: 62px;
}

.voice {
  display: flex;
  flex: none;
  align-items: center;
  justify-content: center;
  width: 97px;
  height: 78px;
  padding: 0;
  border: none;
  border-radius: 50%;
  background: #fff;
}
```
